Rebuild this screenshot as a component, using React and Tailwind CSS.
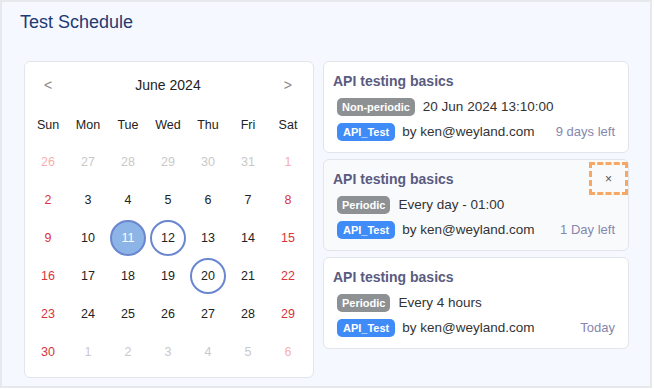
import React from "react";

const weeks = [
  [["26", "po"], ["27", "o"], ["28", "o"], ["29", "o"], ["30", "o"], ["31", "o"], ["1", "po"]],
  [["2", "w"], ["3", "n"], ["4", "n"], ["5", "n"], ["6", "n"], ["7", "n"], ["8", "w"]],
  [["9", "w"], ["10", "n"], ["11", "sel"], ["12", "ring"], ["13", "n"], ["14", "n"], ["15", "w"]],
  [["16", "w"], ["17", "n"], ["18", "n"], ["19", "n"], ["20", "ring"], ["21", "n"], ["22", "w"]],
  [["23", "w"], ["24", "n"], ["25", "n"], ["26", "n"], ["27", "n"], ["28", "n"], ["29", "w"]],
  [["30", "w"], ["1", "o"], ["2", "o"], ["3", "o"], ["4", "o"], ["5", "o"], ["6", "po"]],
];

function Day({ d, t }) {
  if (t === "sel") {
    return (
      <div className="h-[36px] w-[36px] rounded-full border-2 border-[#6a86d0] bg-[#8db4e6] text-white flex items-center justify-center">
        {d}
      </div>
    );
  }
  if (t === "ring") {
    return (
      <div className="h-[36px] w-[36px] rounded-full border-2 border-[#6a86d0] text-[#222] flex items-center justify-center">
        {d}
      </div>
    );
  }
  const color =
    t === "w" ? "text-[#d9343c]" : t === "o" ? "text-[#c9c9c9]" : t === "po" ? "text-[#f7b0b0]" : "text-[#222]";
  return <span className={color}>{d}</span>;
}

function Card({ kind, when, left, hover }) {
  return (
    <div
      className={`relative h-[92px] rounded-md border border-[#e2e5ea] pt-[10px] pl-[9px] pr-[13px] ${
        hover ? "bg-[#f9fafc]" : "bg-white"
      }`}
    >
      <div className="h-[18px] flex items-center text-[14px] font-bold text-[#595b80] leading-none">
        API testing basics
      </div>
      <div className="mt-[8px] pl-[4px] h-[18px] flex items-center gap-[8px]">
        <span className="h-[18px] px-[5px] rounded-[5px] bg-[#8e9194] text-white text-[11px] font-bold flex items-center leading-none">
          {kind}
        </span>
        <span className="text-[13.5px] text-[#333]">{when}</span>
      </div>
      <div className="mt-[7px] pl-[4px] h-[18px] flex items-center">
        <span className="h-[18px] px-[6px] rounded-[5px] bg-[#3f8cf8] text-white text-[11px] font-bold flex items-center leading-none">
          API_Test
        </span>
        <span className="ml-[7px] text-[13.5px] text-[#333]">by ken@weyland.com</span>
        <span className="ml-auto text-[13px] text-[#8587ad]">{left}</span>
      </div>
      {hover && (
        <div className="absolute right-[0px] top-[2px] h-[33px] w-[39px] border-[3px] border-dashed border-[#f5a763] flex items-center justify-center text-[12px] text-[#555] leading-none">
          ×
        </div>
      )}
    </div>
  );
}

export default function App() {
  return (
    <div
      className="w-[652px] h-[388px] border-2 border-[#e6e8eb] bg-[#f5f8ff]"
      style={{ fontFamily: '"Liberation Sans", Arial, sans-serif' }}
    >
      <div className="pl-[18px] pt-[9px] h-[59px] text-[18px] text-[#1f3a73] leading-[22px]">Test Schedule</div>
      <div className="flex pl-[22px] gap-[9px]">
        <div className="w-[290px] h-[317px] bg-white rounded-md border border-[#e2e5ea] pl-[3px] pr-[5px]">
          <div className="h-[46px] flex items-center justify-between px-[16px]">
            <span className="text-[14px] text-[#888]">&lt;</span>
            <span className="text-[14px] text-[#222]">June 2024</span>
            <span className="text-[14px] text-[#888]">&gt;</span>
          </div>
          <div className="grid grid-cols-7 h-[35px] items-center text-[12.5px] text-[#222]">
            {["Sun", "Mon", "Tue", "Wed", "Thu", "Fri", "Sat"].map((w) => (
              <div key={w} className="text-center">{w}</div>
            ))}
          </div>
          {weeks.map((wk, i) => (
            <div key={i} className="grid grid-cols-7 h-[38px] text-[12.5px]">
              {wk.map(([d, t], j) => (
                <div key={j} className="flex items-center justify-center">
                  <Day d={d} t={t} />
                </div>
              ))}
            </div>
          ))}
        </div>
        <div className="w-[306px] flex flex-col gap-[6px]">
          <Card kind="Non-periodic" when="20 Jun 2024 13:10:00" left="9 days left" />
          <Card kind="Periodic" when="Every day - 01:00" left="1 Day left" hover />
          <Card kind="Periodic" when="Every 4 hours" left="Today" />
        </div>
      </div>
    </div>
  );
}
